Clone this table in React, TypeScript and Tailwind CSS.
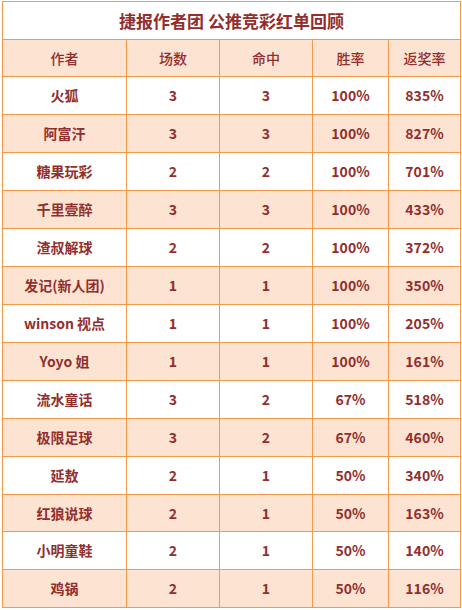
import React from "react";

const rows: [string, string, string, string, string][] = [
  ["火狐", "3", "3", "100%", "835%"],
  ["阿富汗", "3", "3", "100%", "827%"],
  ["糖果玩彩", "2", "2", "100%", "701%"],
  ["千里壹醉", "3", "3", "100%", "433%"],
  ["渣叔解球", "2", "2", "100%", "372%"],
  ["发记(新人团)", "1", "1", "100%", "350%"],
  ["winson 视点", "1", "1", "100%", "205%"],
  ["Yoyo 姐", "1", "1", "100%", "161%"],
  ["流水童话", "3", "2", "67%", "518%"],
  ["极限足球", "3", "2", "67%", "460%"],
  ["延敖", "2", "1", "50%", "340%"],
  ["红狼说球", "2", "1", "50%", "163%"],
  ["小明童鞋", "2", "1", "50%", "140%"],
  ["鸡锅", "2", "1", "50%", "116%"],
];

const widths = ["w-[124px]", "w-[93px]", "w-[93px]", "w-[76px]", "flex-1"];

function Row({ cells, bg, h, bold, last }: { cells: string[]; bg: string; h: string; bold: boolean; last: boolean }) {
  return (
    <div className={`flex ${h} ${bg} ${last ? "" : "border-b border-[#f39a4a]"}`}>
      {cells.map((c, i) => (
        <div
          key={i}
          className={`${widths[i]} flex items-center justify-center text-[14px] ${bold ? "font-bold" : "font-medium"} ${i < 4 ? "border-r border-[#f39a4a]" : ""}`}
        >
          {c}
        </div>
      ))}
    </div>
  );
}

export default function App() {
  return (
    <div className="w-[462px] h-[610px] bg-white pt-[1px] pl-[2px]" style={{ fontFamily: '"Noto Sans CJK SC", "Noto Sans", sans-serif' }}>
      <div className="w-[459px] border border-[#f39a4a] text-[#922e2e]">
        <div className="h-[38px] flex items-center justify-center border-b border-[#f39a4a] text-[17px] font-bold">
          捷报作者团&nbsp;公推竞彩红单回顾
        </div>
        <Row cells={["作者", "场数", "命中", "胜率", "返奖率"]} bg="bg-[#fde4d2]" h="h-[37px]" bold={false} last={false} />
        {rows.map((r, i) => (
          <Row
            key={i}
            cells={r}
            bg={i % 2 === 0 ? "bg-white" : "bg-[#fde4d2]"}
            h={i === 11 || i === 13 ? "h-[37px]" : "h-[38px]"}
            bold={true}
            last={i === rows.length - 1}
          />
        ))}
      </div>
    </div>
  );
}
